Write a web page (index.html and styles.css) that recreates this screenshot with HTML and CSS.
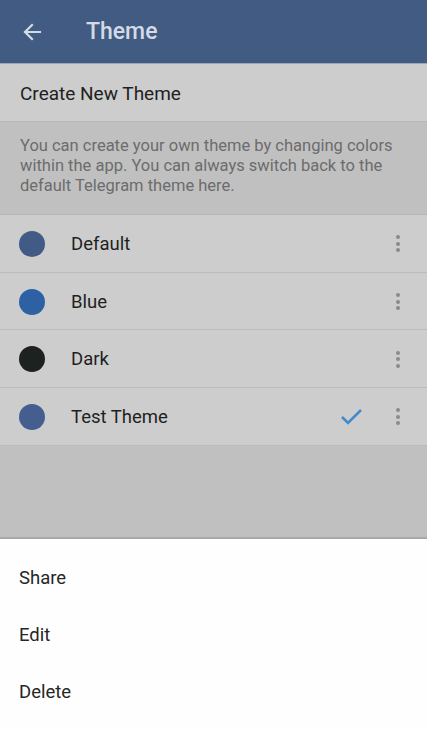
FILE: index.html
```html
<!DOCTYPE html>
<html>
<head>
<meta charset="utf-8">
<link rel="stylesheet" href="styles.css">
</head>
<body>
<div class="screen">
  <header class="appbar">
    <svg class="back" width="24" height="24" viewBox="0 0 24 24"><path d="M20 12H5M12 5l-7 7 7 7" fill="none" stroke="#d3dbe5" stroke-width="2.2" stroke-linecap="square"/></svg>
    <div class="title">Theme</div>
  </header>
  <div class="create">Create New Theme</div>
  <div class="info">You can create your own theme by changing colors within the app. You can always switch back to the default Telegram theme here.</div>
  <div class="list">
    <div class="row"><span class="dot c-default"></span><span class="name">Default</span><span class="more"><i></i><i></i><i></i></span></div>
    <div class="row"><span class="dot c-blue"></span><span class="name">Blue</span><span class="more"><i></i><i></i><i></i></span></div>
    <div class="row"><span class="dot c-dark"></span><span class="name">Dark</span><span class="more"><i></i><i></i><i></i></span></div>
    <div class="row"><span class="dot c-test"></span><span class="name">Test Theme</span>
      <svg class="check" width="24" height="20" viewBox="0 0 24 20"><path d="M2 10l6 6L21 3" fill="none" stroke="#3f8ccc" stroke-width="2.6"/></svg>
      <span class="more"><i></i><i></i><i></i></span></div>
  </div>
  <div class="fill"></div>
  <div class="sheet">
    <div class="item">Share</div>
    <div class="item">Edit</div>
    <div class="item">Delete</div>
  </div>
</div>
</body>
</html>
```
FILE: styles.css
```css
* { box-sizing: border-box; }
html, body { margin: 0; padding: 0; }
body { font-family: Roboto, "Noto Sans", sans-serif; background: #c0c0c0; }
.screen { width: 427px; height: 729px; display: flex; flex-direction: column; overflow: hidden; }
.appbar { height: 64px; background: #415b83; display: flex; align-items: center; padding-left: 20px; flex: none; border-bottom: 1px solid #9da6b0; }
.back { flex: none; }
.title { margin-left: 42px; color: #d3dbe5; font-size: 23px; font-weight: 500; }
.create { height: 58px; background: #cdcdcd; display: flex; align-items: center; padding: 1px 0 0 20px; font-size: 19px; color: #1f1f1f; flex: none; border-bottom: 1px solid #b8b8b8; }
.info { background: #c0c0c0; padding: 14px 20px 18px 20px; color: #6c6c6c; font-size: 16.5px; line-height: 20px; flex: none; border-bottom: 1px solid #b6b6b6; }
.list { background: #cdcdcd; flex: none; }
.row { height: 57.7px; display: flex; align-items: center; padding: 1px 0 0 19px; border-bottom: 1px solid #bcbcbc; }
.dot { width: 26px; height: 26px; border-radius: 50%; flex: none; }
.c-default { background: #415b86; }
.c-blue { background: #2e61a3; }
.c-dark { background: #1d2120; }
.c-test { background: #445f8f; }
.name { margin-left: 26px; font-size: 18.5px; color: #1f1f1f; flex: 1; }
.check { margin-right: 32px; flex: none; }
.more { width: 4px; margin-right: 27px; display: flex; flex-direction: column; gap: 2.5px; flex: none; }
.more i { width: 4px; height: 4px; border-radius: 50%; background: #8a8a8a; display: block; }
.fill { flex: 1; background: #c0c0c0; border-bottom: 2px solid #a9a9a9; }
.sheet { background: #fefefe; flex: none; height: 190px; padding-top: 10px; }
.item { height: 57px; display: flex; align-items: center; padding-left: 19px; font-size: 18.5px; color: #262626; }
```
